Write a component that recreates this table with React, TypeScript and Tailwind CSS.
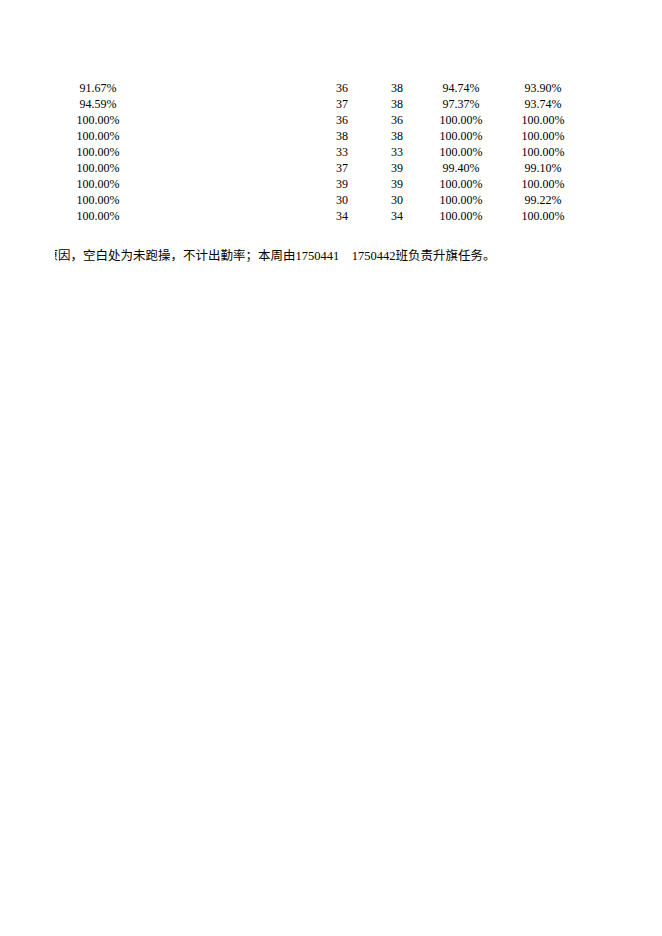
const rows = [
  ['91.67%', '36', '38', '94.74%', '93.90%'],
  ['94.59%', '37', '38', '97.37%', '93.74%'],
  ['100.00%', '36', '36', '100.00%', '100.00%'],
  ['100.00%', '38', '38', '100.00%', '100.00%'],
  ['100.00%', '33', '33', '100.00%', '100.00%'],
  ['100.00%', '37', '39', '99.40%', '99.10%'],
  ['100.00%', '39', '39', '100.00%', '100.00%'],
  ['100.00%', '30', '30', '100.00%', '99.22%'],
  ['100.00%', '34', '34', '100.00%', '100.00%'],
];

export default function App() {
  return (
    <div
      className="w-[662px] h-[936px] bg-white text-black overflow-hidden"
      style={{ fontFamily: '"Liberation Serif", "Noto Sans CJK SC", serif' }}
    >
      <div className="pt-[80px] pl-[55px]">
        {/* attendance rows */}
        <div className="flex flex-col text-[12px]">
          {rows.map((r, i) => (
            <div key={i} className="flex h-[16px] leading-[16px]">
              <div className="w-[86px] text-center">{r[0]}</div>
              <div className="w-[174px]"></div>
              <div className="w-[54px] text-center">{r[1]}</div>
              <div className="w-[56px] text-center">{r[2]}</div>
              <div className="w-[72px] text-center">{r[3]}</div>
              <div className="w-[92px] text-center">{r[4]}</div>
            </div>
          ))}
        </div>

        {/* note, cut off at the left edge of the print area */}
        <div className="mt-[24px] w-[520px] overflow-hidden h-[16px]">
          <div className="ml-[-9.5px] whitespace-pre text-[12.5px] leading-[16px]">
            原因，空白处为未跑操，不计出勤率；本周由1750441    1750442班负责升旗任务。
          </div>
        </div>
      </div>
    </div>
  );
}
